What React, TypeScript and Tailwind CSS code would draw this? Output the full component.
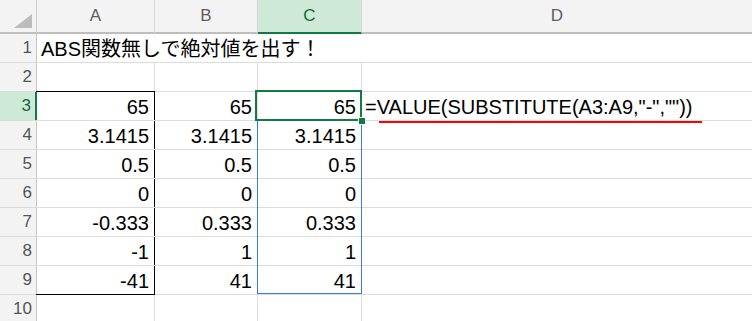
import type { ReactNode } from "react";

const font = { fontFamily: '"Liberation Sans", "Noto Sans CJK JP", sans-serif' };

const rows: { n: number; a?: string; b?: string; c?: string; d?: string; title?: string }[] = [
  { n: 1, title: "ABS関数無しで絶対値を出す！" },
  { n: 2 },
  { n: 3, a: "65", b: "65", c: "65", d: '=VALUE(SUBSTITUTE(A3:A9,"-",""))' },
  { n: 4, a: "3.1415", b: "3.1415", c: "3.1415" },
  { n: 5, a: "0.5", b: "0.5", c: "0.5" },
  { n: 6, a: "0", b: "0", c: "0" },
  { n: 7, a: "-0.333", b: "0.333", c: "0.333" },
  { n: 8, a: "-1", b: "1", c: "1" },
  { n: 9, a: "-41", b: "41", c: "41" },
  { n: 10 },
];

function Cell({ w, children, className = "" }: { w: string; children?: ReactNode; className?: string }) {
  return (
    <div className={`${w} h-full shrink-0 border-r border-[#dcdcdc] flex items-center justify-end pr-[5px] pt-[1px] text-[20px] text-black ${className}`}>
      {children}
    </div>
  );
}

export default function App() {
  return (
    <div className="relative w-[752px] h-[321px] overflow-hidden bg-white" style={font}>
      {/* column headers */}
      <div className="flex h-[34px] bg-[#f3f3f3] text-[17px] text-[#5e5e5e]">
        <div className="w-[37px] shrink-0 border-r border-[#cfcfcf] border-b-2 border-b-[#bebebe] flex items-end justify-end pr-[3px] pb-[3px]">
          <svg width="19" height="15" viewBox="0 0 19 15">
            <polygon points="18,0 18,14 0,14" fill="#bcbcbc" />
          </svg>
        </div>
        <div className="w-[118px] shrink-0 border-r border-[#d6d6d6] border-b-2 border-b-[#bebebe] flex items-center justify-center">A</div>
        <div className="w-[103px] shrink-0 border-r border-[#d6d6d6] border-b-2 border-b-[#bebebe] flex items-center justify-center">B</div>
        <div className="w-[104px] shrink-0 border-r border-[#d6d6d6] border-b-2 border-b-[#107c41] bg-[#cfe9d8] text-[#0e6b38] flex items-center justify-center">C</div>
        <div className="flex-1 border-b-2 border-b-[#bebebe] flex items-center justify-center">D</div>
      </div>

      {rows.map((r) => {
        const boxed = r.n >= 3 && r.n <= 9;
        return (
          <div key={r.n} className="flex h-[29px] border-b border-[#dcdcdc]">
            <div
              className={`w-[37px] shrink-0 h-full flex items-center justify-end pr-[4px] text-[17px] ${
                r.n === 3
                  ? "bg-[#cfe9d8] text-[#0e6b38] border-r-2 border-[#107c41]"
                  : "bg-[#f3f3f3] text-[#555555] border-r border-[#c6c6c6]"
              }`}
            >
              {r.n}
            </div>
            {r.title ? (
              <div className="flex-1 h-full flex items-center pl-[4px] pt-[1px] text-[20px] text-black whitespace-nowrap">{r.title}</div>
            ) : (
              <>
                <Cell w="w-[118px]" className={boxed ? "border-r-black" : ""}>{r.a}</Cell>
                <Cell w="w-[103px]">{r.b}</Cell>
                <Cell w="w-[104px]">{r.c}</Cell>
                <div className="flex-1 h-full flex items-center pl-[3px] pt-[1px] text-[20px] text-black whitespace-nowrap">{r.d}</div>
              </>
            )}
          </div>
        );
      })}

      {/* border box around A3:A9 */}
      <div className="absolute left-[36px] top-[91px] w-[119px] h-[204px] border-t border-b border-black pointer-events-none" />
      {/* spill range C4:C9 */}
      <div className="absolute left-[257px] top-[120px] w-[105px] h-[174px] shadow-[inset_0_0_0_1px_#3a7be6] pointer-events-none" />
      {/* active cell C3 */}
      <div className="absolute left-[255px] top-[90px] w-[107px] h-[31px] border-2 border-[#107c41] pointer-events-none" />
      <div className="absolute left-[358px] top-[117px] w-[8px] h-[8px] bg-[#107c41] border border-white" />
      {/* red underline */}
      <div className="absolute left-[379px] top-[121px] w-[323px] h-[2px] bg-[#ff0000]" />
    </div>
  );
}
